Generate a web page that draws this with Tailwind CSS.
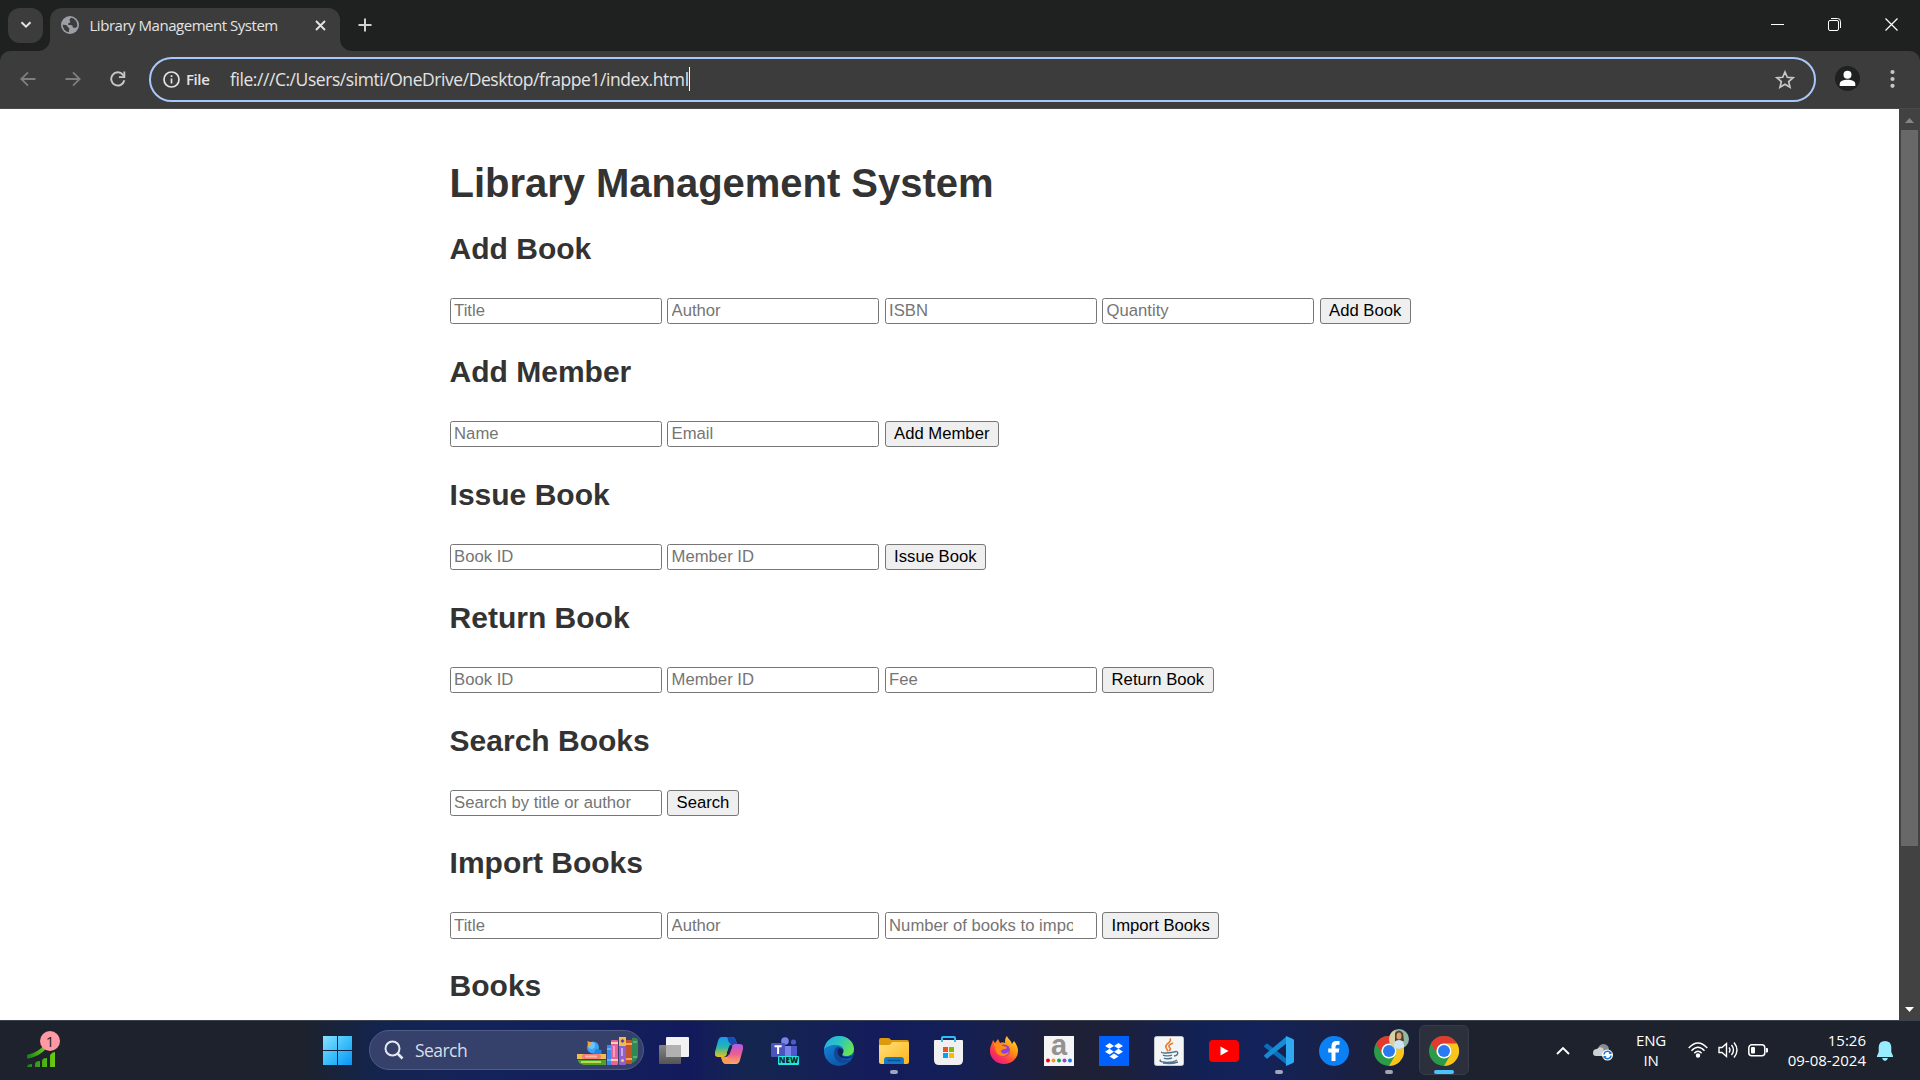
<!DOCTYPE html>
<html lang="en">
<head>
<meta charset="utf-8">
<title>Library Management System</title>
<script src="https://cdn.jsdelivr.net/npm/@tailwindcss/browser@4"></script>
</head>
<body class="w-[1920px] h-[1080px] overflow-hidden flex flex-col bg-[#1f2120] font-['Open_Sans',sans-serif]">

<!-- Tab strip -->
<header class="h-[51px] shrink-0 flex items-start bg-[#1f2120] text-[#e3e3e3]">
  <div class="ml-2 mt-2 size-[35px] rounded-xl bg-[#3c3c3c] grid place-items-center">
    <svg class="mb-0.5" width="12" height="8" viewBox="0 0 12 8" fill="none" stroke="#e3e3e3" stroke-width="2"><path d="M1.5 1.2 6 5.7l4.5-4.5"/></svg>
  </div>
  <div class="relative ml-[7px] mt-2 w-[290px] h-[43px] rounded-t-xl bg-[#3c3c3c] flex items-center pl-[11px] pb-[9px]">
    <svg class="absolute -left-3 bottom-0" width="12" height="12"><path d="M12 0v12H0A12 12 0 0 0 12 0z" fill="#3c3c3c"/></svg>
    <svg class="absolute -right-3 bottom-0" width="12" height="12"><path d="M0 0v12h12A12 12 0 0 1 0 0z" fill="#3c3c3c"/></svg>
    <svg class="shrink-0" width="18" height="18" viewBox="0 0 18 18"><circle cx="9" cy="9" r="9" fill="#9aa0a6"/><path d="M10.2 1.8c-1 .5-1.6 1.300-1.600 2.300 0 1 .7 1.200.7 2-.100 1.100-2.300.6-2.300 2 0 1 1.200.9 2.600.9 1.500 0 2.100.8 2.100 1.800 0 1.200 1.500.9 2.900.9 1 0 1.600-.8 1.700-2.700A7.300 7.300 0 0 0 10.200 1.800zM1.700 8.700c1.700 0 4.700.2 4.700 1.800 0 1.100 1.900.7 1.900 2.200 0 1.200-.5 2.200-.4 3.500A7.300 7.300 0 0 1 1.700 8.700z" fill="#3c3c3c"/></svg>
    <span class="ml-[10.500px] w-[212px] shrink-0 text-[15px] leading-5 tracking-[-0.47px] whitespace-nowrap">Library Management System</span>
    <svg class="ml-[13px] mt-px shrink-0" width="11" height="11" viewBox="0 0 11 11" stroke="#e3e3e3" stroke-width="1.900"><path d="M1 1l9 9M10 1l-9 9"/></svg>
  </div>
  <svg class="ml-[18px] mt-[18px]" width="14" height="14" viewBox="0 0 14 14" stroke="#d0d2d1" stroke-width="2"><path d="M7 0.500v13M.5 7h13"/></svg>
  <div class="ml-auto mt-[18px] mr-[22px] flex items-center gap-[44px]">
    <svg width="13" height="13" shape-rendering="crispEdges"><path d="M0 6h13v1H0z" fill="#fff"/></svg>
    <svg width="13" height="13" viewBox="0 0 13 13" fill="none" stroke="#fff"><rect x=".5" y="2.500" width="10" height="10" rx="1.500"/><path d="M3 .5h6.500a3 3 0 0 1 3 3V10"/></svg>
    <svg width="13" height="13" viewBox="0 0 13 13" stroke="#fff" stroke-width="1.200"><path d="M.5.5l12 12M12.500.5l-12 12"/></svg>
  </div>
</header>

<!-- Toolbar -->
<div class="h-[58px] shrink-0 rounded-t-[10px] bg-[#3c3c3c] border-b border-[#494949] flex items-start">
  <div class="flex items-center h-[55px] pl-5 gap-[29px]">
    <svg width="16" height="16" viewBox="0 0 16 16" fill="none" stroke="#7e7e7e" stroke-width="1.800"><path d="M15.500 8H1.500M8 1.300 1.300 8 8 14.700"/></svg>
    <svg width="16" height="16" viewBox="0 0 16 16" fill="none" stroke="#7e7e7e" stroke-width="1.800"><path d="M.5 8h14M8 1.300 14.700 8 8 14.700"/></svg>
    <svg width="16" height="16" viewBox="0 0 16 16" fill="none" stroke="#c7c7c7" stroke-width="1.900"><path d="M14.300 9.200A6.600 6.600 0 1 1 13 3.800L14.500 5.500"/><path d="M14.300.5v5.600H8.900" /></svg>
  </div>
  <div class="ml-[23px] mt-1.5 w-[1667px] h-[45px] rounded-full border-[2.500px] border-[#a8c7fa] flex items-center text-[#e3e3e3]">
    <svg class="ml-[12px]" width="17" height="17" viewBox="0 0 17 17" fill="none" stroke="#e3e3e3" stroke-width="1.700"><circle cx="8.500" cy="8.500" r="7.500"/><path d="M8.500 7.500v5M8.500 4.300v1.700"/></svg>
    <span class="ml-[6px] w-[44px] text-[15px] font-semibold tracking-[-0.4px] leading-5 pb-0.5">File</span>
    <span class="text-[17.500px] leading-6 pb-px tracking-[-0.44px] whitespace-nowrap">file:///C:/Users/simti/OneDrive/Desktop/frappe1/index.html</span>
    <span class="w-px h-6 mb-0.5 bg-white"></span>
    <svg class="ml-auto mr-[19px]" width="20" height="19" viewBox="0 0 20 19" fill="none" stroke="#c7c7c7" stroke-width="1.700"><path d="M10 2l2.300 5.300 5.700.5-4.300 3.800 1.300 5.600-5-3-5 3 1.300-5.600L2 7.800l5.700-.5z"/></svg>
  </div>
  <svg class="ml-[19px] mt-[15px]" width="25" height="25" viewBox="0 0 25 25"><circle cx="12.500" cy="12.500" r="12.500" fill="#1f2120"/><circle cx="12.500" cy="8.700" r="4" fill="#fff"/><path d="M4.700 20v-2c0-3 4-4.300 7.800-4.300s7.800 1.300 7.800 4.300v2z" fill="#fff"/></svg>
  <svg class="ml-[30px] mt-[18px]" width="5" height="20" viewBox="0 0 5 20" fill="#c7c7c7"><circle cx="2.500" cy="3" r="2.100"/><circle cx="2.500" cy="10" r="2.100"/><circle cx="2.500" cy="16.800" r="2.100"/></svg>
</div>

<!-- Page -->
<div class="flex-1 min-h-0 flex">
  <main class="flex-1 h-[911px] overflow-hidden bg-white pl-[449.600px] pt-[51px] text-[#333] font-['Liberation_Sans',Arial,sans-serif]">
    <h1 class="text-[40px] leading-[46px] font-bold tracking-[-0.03px]">Library Management System</h1>
    <div id="sections" class="pt-[26px]"></div>
  </main>
  <div class="w-[21px] bg-[#424242] flex flex-col items-center">
    <svg class="mt-[9px] shrink-0" width="9" height="5"><path d="M0 5 4.500 0 9 5z" fill="#858585"/></svg>
    <div class="mt-[7px] w-[17px] h-[716px] mr-px bg-[#686868] shrink-0"></div>
    <svg class="mt-auto mb-[8px] shrink-0" width="9" height="5"><path d="M0 0h9L4.500 5z" fill="#fff"/></svg>
  </div>
</div>

<!-- Taskbar -->
<footer class="h-[60px] shrink-0 border-t border-[#3b444e] flex items-center text-white bg-[linear-gradient(90deg,#1d222c_0px,#1d222c_300px,#13244f_380px,#13235a_470px,#121f5c_620px,#131a5c_690px,#14264f_750px,#141c5c_880px,#131f58_950px,#1f2036_1060px,#1e2038_1110px,#122155_1200px,#13225a_1260px,#1b203c_1380px,#1d222c_1480px,#1d222c_1920px)]">
  <div class="relative ml-[27px] mt-1.5 w-[29px] h-[28px]">
    <svg width="29" height="28" viewBox="0 0 29 28"><defs><linearGradient id="gr"><stop stop-color="#17831b"/><stop offset="1" stop-color="#6ecb12"/></linearGradient></defs><g fill="url(#gr)"><path d="M0 27q0-3 5-3v3zM8 27v-3q0-3 5-3v6zM15 27v-6q0-3 5-3v9zM23 27V15q2-3 5-3v15z"/></g><path d="M1.500 16.500Q12 14 18 7" fill="none" stroke="url(#gr)" stroke-width="4" stroke-linecap="round"/></svg>
    <div class="absolute left-[13px] top-[-9px] size-5 rounded-full bg-[#ff99a4] text-[#222] text-[15px] leading-5 text-center">1</div>
  </div>
  <svg class="ml-[267px]" width="29" height="29" viewBox="0 0 29 29"><defs><linearGradient id="w" x1="0" y1="0" x2="29" y2="29" gradientUnits="userSpaceOnUse"><stop stop-color="#8be0ff"/><stop offset=".5" stop-color="#3cc0fb"/><stop offset="1" stop-color="#0a93f6"/></linearGradient></defs><path fill="url(#w)" d="M0 0h14v14H0zM15 0h14v14H15zM0 15h14v14H0zM15 15h14v14H15z"/></svg>
  <div class="ml-[17px] mb-px w-[275px] h-10 rounded-full bg-[#35416b] border border-[#515d84] overflow-hidden flex items-center">
    <svg class="ml-[14px]" width="20" height="20" viewBox="0 0 20 20" fill="none" stroke="#e6e8ee" stroke-width="2"><circle cx="8.500" cy="8.500" r="7"/><path d="M13.500 13.500 18.500 18.500" stroke-width="2.600"/></svg>
    <span class="ml-[11px] text-[17.500px] tracking-[-0.55px] leading-6 text-[#dadde6]">Search</span>
    <svg class="ml-auto mr-[3px] mt-0.5" width="64" height="30" viewBox="0 0 64 30">
      <path d="M2 24h28v5H8q-6-1-6-5z" fill="#53a12d"/><path d="M5 26h20" stroke="#b5dc53" stroke-width="2"/><path d="M1 18h29v5H1z" fill="#f3bc52"/><rect x="6" y="18" width="19" height="5" rx="2.500" fill="#ef7f78"/><rect x="9" y="19.500" width="12" height="2" fill="#ffb6a3"/>
      <circle cx="17" cy="11.500" r="6" fill="#3ba4f3"/><circle cx="15.500" cy="9.500" r="3.500" fill="#6ac5ff"/><path d="M11.500 5l5 2-4.500 4z" fill="#f6a13a"/><path d="M20 13l5.500 1v4H17z" fill="#2186e0"/>
      <rect x="31" y="9" width="4" height="20" fill="#3989ef"/><path d="M31 13h4M31 24h4" stroke="#9fd0ff"/>
      <rect x="35" y="4" width="7" height="25" rx="1" fill="#e8629d"/><path d="M35 7h7M35 24h7" stroke="#ffd0a5" stroke-width="2"/><path d="M38 10v11" stroke="#ff9ac3" stroke-width="2"/>
      <rect x="43" y="1" width="7" height="28" rx="1" fill="#8d62cf"/><path d="M43 1h7v9h-7z" fill="#f4bd3d"/><path d="M46.500 3l2 2-2 2-2-2z" fill="#5a3bb1"/><path d="M46 12v8" stroke="#c5a7f3" stroke-width="2"/><circle cx="46.500" cy="24.500" r="1.500" fill="#f7cf57"/>
      <rect x="50" y="4" width="6" height="24" rx="1" fill="#c45427"/><path d="M50 8h6M50 23h6" stroke="#f4a55a" stroke-width="2"/>
      <path d="M56 2q5-1 6 2v16q-1 5-6 7z" fill="#2f8955"/><path d="M57 6h4M57 21h4" stroke="#8ed090"/>
    </svg>
  </div>
  <nav class="ml-[2px] h-full flex items-center *:relative *:w-[55px] *:shrink-0 *:h-full *:flex *:items-center *:justify-center">
    <div><svg width="30" height="30" viewBox="0 0 30 30"><defs><linearGradient id="tv" x1="0" y1="0" x2="0" y2="1"><stop stop-color="#858585"/><stop offset="1" stop-color="#555"/></linearGradient></defs><rect y="9" width="22" height="19" rx="1" fill="url(#tv)"/><rect x="7" y="1" width="23" height="20" rx="1" fill="#f2f2f2"/><path d="M7 9h15v12H8a1 1 0 0 1-1-1z" fill="#b1b1b1"/></svg></div>
    <div><svg width="28" height="27" viewBox="0 0 28 27"><defs><linearGradient id="c1" x1="0" y1="0" x2="0" y2="1"><stop stop-color="#159af0"/><stop offset=".5" stop-color="#25b6b0"/><stop offset="1" stop-color="#ebc317"/></linearGradient><linearGradient id="c2" x1="0" y1="0" x2="0" y2="1"><stop stop-color="#a95be8"/><stop offset=".5" stop-color="#ef5d90"/><stop offset="1" stop-color="#ffad61"/></linearGradient></defs><path d="M7 0h10q3 0 4 4l1 3h-4q-3 0-4 3l-2 7q-1 3-4 3H3q-4 0-3-5L3 4q1-4 4-4z" fill="url(#c1)"/><path d="M16 0q4 0 5 4l1 3h-5q-3 0-4-4 0-3-2-3z" fill="#174bb5"/><path d="M21 27H11q-3 0-4-4l-1-3h4q3 0 4-3l2-7q1-3 4-3h5q4 0 3 5l-3 11q-1 4-4 4z" fill="url(#c2)"/><path d="M12 27q-4 0-5-4l-1-3h5q3 0 4 4 0 3 2 3z" fill="#fb9a54"/><path d="M13 17l3-8" stroke="#16204f" stroke-width="3"/></svg></div>
    <div><svg class="ml-0.5" width="28" height="28" viewBox="0 0 28 28"><circle cx="14" cy="4" r="3.800" fill="#7b83eb"/><circle cx="22.500" cy="5" r="2.600" fill="#5059c9"/><path d="M18 9h8v9q-1 3-5 3h-3z" fill="#5059c9"/><path d="M8 9h12v14h-8q-4-2-4-6z" fill="#7b83eb"/><rect y="6" width="14" height="14" rx="1" fill="#4b53bc"/><path d="M3.500 9.200h7.200M7.100 9.200V17" stroke="#fff" stroke-width="2"/><rect x="7" y="19" width="21" height="9" rx="1" fill="#25e5df"/><text x="17.500" y="26.400" text-anchor="middle" font-size="8" font-weight="800" font-family="Open Sans" fill="#05252c">NEW</text></svg></div>
    <div><svg width="30" height="30" viewBox="0 0 30 30"><defs><linearGradient id="e1" x1="0" y1="0" x2="1" y2=".5"><stop stop-color="#28a8e8"/><stop offset=".5" stop-color="#2bc4c6"/><stop offset="1" stop-color="#65e255"/></linearGradient><linearGradient id="e2" x1="0" y1="0" x2=".6" y2="1"><stop stop-color="#168fe0"/><stop offset="1" stop-color="#0b54a5"/></linearGradient></defs><circle cx="15" cy="15" r="15" fill="url(#e2)"/><path d="M0 14C1 5 8 0 15 0c9 0 15 6 15 13 0 5-4 7-7 7-5 0-5-1-4-3 2-4-1-8-7-8C6 9 1 11 0 14z" fill="url(#e1)"/><path d="M11 13c-3 6 1 14 9 14 4 0 6-2 8-3-4 1-12 0-14-7-.5-3 .5-5 2-6-2-.5-4 0-5 2z" fill="#10479b"/><path d="M15 12c-3 3-1 9 4 10 4 1 8 0 11-3-2 1-4 2-7 2-5 0-6-2-4-4 1-2 0-5-4-5z" fill="#14205a"/></svg></div>
    <div><svg width="30" height="26" viewBox="0 0 30 26"><defs><linearGradient id="f" x1="0" y1="0" x2="1" y2="1"><stop stop-color="#ffe07a"/><stop offset="1" stop-color="#fcb51b"/></linearGradient></defs><path d="M0 2q0-2 2-2h7q2 0 3 2h16q2 0 2 2v5H0z" fill="#dc9a0c"/><path d="M0 7h10q2 0 3-3h15q2 0 2 2v18q0 2-2 2H2q-2 0-2-2z" fill="url(#f)"/><path d="M5 26v-4q0-3 3-3h14q3 0 3 3v4z" fill="#1579c9"/><path d="M9 22.500h12" stroke="#09518f" stroke-width="1.500" stroke-linecap="round"/></svg><i class="absolute bottom-[6px] w-2 h-1 rounded-full bg-[#a2a5bb]"></i></div>
    <div><svg width="29" height="29" viewBox="0 0 29 29"><path d="M8 6V2q0-1 1-1h11q1 0 1 1v4" fill="none" stroke="#31bdf3" stroke-width="2"/><path d="M0 5q0-1 1-1h27q1 0 1 1v19q0 5-5 5H5q-5 0-5-5z" fill="#f0f0f0"/><path d="M8 4v2M21 4v2" stroke="#31bdf3" stroke-width="2"/><path d="M9 11h5v5H9z" fill="#f25022"/><path d="M15 11h5v5h-5z" fill="#7fba00"/><path d="M9 17h5v5H9z" fill="#00a4ef"/><path d="M15 17h5v5h-5z" fill="#ffb900"/></svg></div>
    <div><svg class="mb-0.5" width="28" height="28" viewBox="0 0 28 28"><defs><linearGradient id="ff" x1="1" y1="0" x2=".2" y2="1"><stop stop-color="#fff04d"/><stop offset=".4" stop-color="#ff980e"/><stop offset=".75" stop-color="#ff3650"/><stop offset="1" stop-color="#e21790"/></linearGradient></defs><path d="M17 0c1 3 4 4 5 8l2-3c3 4 4 7 4 10a14 13 0 0 1-28 0C0 10 2 8 3 4l2 3 3-4 2 4c2-1 3-1 5 0 0-3 0-5 2-7z" fill="url(#ff)"/><circle cx="14" cy="14.500" r="6" fill="#9040df"/><path d="M4 8c4-2 6 0 9 2 2 0 4 1 4 2-2 2-4 0-6 3 0 3 5 4 8 0-1 6-10 7-13 1z" fill="#ff8a16"/></svg></div>
    <div><svg width="30" height="30" viewBox="0 0 30 30"><rect width="30" height="30" fill="#f5f5f5"/><text x="15" y="19" text-anchor="middle" font-size="29" font-weight="700" font-family="Liberation Sans" fill="#929292">a</text><circle cx="4" cy="24.500" r="2" fill="#f00014"/><circle cx="9.500" cy="24.500" r="2" fill="#f7981d"/><circle cx="15" cy="24.500" r="2" fill="#12a653"/><circle cx="20.500" cy="24.500" r="2" fill="#9344d9"/><circle cx="26" cy="24.500" r="2" fill="#1280e8"/></svg></div>
    <div><svg width="30" height="30" viewBox="0 0 30 30"><rect width="30" height="30" fill="#0061fe"/><path fill="#fff" d="M10.500 7l4.500 2.900-4.500 2.900L6 9.900zM19.500 7l4.500 2.900-4.500 2.900L15 9.900zM10.500 12.800l4.500 2.900-4.500 2.900L6 15.700zM19.500 12.800l4.500 2.900-4.500 2.900-4.500-2.900zM15 17.500l4.500 2.900-4.500 2.900-4.500-2.900z"/></svg></div>
    <div><svg width="30" height="30" viewBox="0 0 30 30" fill="none"><rect x=".5" y=".5" width="29" height="29" rx="2" fill="#f5f5f5" stroke="#c3c8cd"/><path d="M16 2.500c3 4-6 5-4 9l2 4M19 7c-5 2-5 3-3 5 1 1 0 2-1 3" stroke="#e77a2d" stroke-width="1.600"/><path d="M8 16c-2 1 5 1.500 12 0M9 19c1 1 7 1.200 9 0M10 22c1 1 6 1 8 0M20 16c5-2 5 3 0 4M7 24c-5 2 10 4 16 0M9 27c6 1 12 0 15-1" stroke="#4d7590" stroke-width="1.400"/></svg></div>
    <div><svg width="30" height="22" viewBox="0 0 30 22"><rect width="30" height="22" rx="4" fill="#f00"/><path d="M11.500 6.500v9l8-4.500z" fill="#fff"/></svg></div>
    <div><svg width="30" height="30" viewBox="0 0 30 30"><path d="M0 10l2-2q1-1 2 0l19 15v6L1 11.500Q0 11 0 10z" fill="#0a6fb9"/><path d="M0 20l2 2q1 1 2 0L23 7V0L1 18.500Q0 19 0 20z" fill="#168cd4"/><path d="M22 0l7 3q1 .5 1 2v20q0 1.500-1 2l-7 3z" fill="#2fa9f1"/></svg><i class="absolute bottom-[6px] w-2 h-1 rounded-full bg-[#a2a5bb]"></i></div>
    <div><svg width="30" height="30" viewBox="0 0 30 30"><circle cx="15" cy="15" r="15" fill="#0c80f5"/><path d="M12.500 25v-8.500H9.200v-4h3.300V10q0-5 5-5h3v3.800h-2q-2 0-2 2v1.700h3.800l-.6 4h-3.200V25z" fill="#fff"/></svg></div>
    <div><svg width="30" height="30" viewBox="0 0 30 30"><g id="chrome"><circle cx="15" cy="15" r="15" fill="#2a9b47"/><path d="M2 7.500A15 15 0 0 1 28 7.500H15a7.500 7.500 0 0 0-6.500 11.300z" fill="#e23a2e"/><path d="M28 7.500A15 15 0 0 1 15 30l6.500-11.300A7.500 7.500 0 0 0 15 7.500z" fill="#fcc31b"/><circle cx="15" cy="15" r="7.600" fill="#fff"/><circle cx="15" cy="15" r="6" fill="#2979f0"/></g></svg>
      <svg class="absolute left-[28px] top-[8px]" width="20" height="20" viewBox="0 0 20 20"><defs><clipPath id="av"><circle cx="10" cy="10" r="10"/></clipPath></defs><g clip-path="url(#av)"><path d="M0 0h20v20H0z" fill="#8fb9a3"/><path d="M0 0h6v20H0z" fill="#d9cfa5"/><path d="M6 4q4-5 8 0l1 8H6z" fill="#593d2b"/><ellipse cx="10" cy="7" rx="2.500" ry="3.500" fill="#d7a07c"/><path d="M5 20q-1-9 5-9t5 9z" fill="#cfe6f2"/></g></svg><i class="absolute bottom-[6px] w-2 h-1 rounded-full bg-[#a2a5b0]"></i></div>
    <div><span class="absolute left-[2.500px] top-1 size-[50px] rounded-md bg-[#2c303d] border border-[#383c48]"></span><svg class="relative" width="30" height="30" viewBox="0 0 30 30"><use href="#chrome"/></svg><i class="absolute bottom-[6px] w-5 h-1 rounded-full bg-[#4cc2ff]"></i></div>
  </nav>
  <div class="ml-auto mb-px flex items-center text-[15px] leading-5">
    <svg width="14" height="9" viewBox="0 0 14 9" fill="none" stroke="#fff" stroke-width="1.900"><path d="M1 8l6-6 6 6"/></svg>
    <svg class="ml-[23px] mt-[3px]" width="20" height="18" viewBox="0 0 20 18"><path d="M5 6q1-5 6-5 5 1 5 6l1 5H5z" fill="#8a8b8e"/><path d="M0 10q0-4 4-4 2-3 6-1l2 8H3q-3 0-3-3z" fill="#cfd0d2"/><circle cx="14.500" cy="12" r="5.500" fill="#fff"/><path d="M11 11.500a3.500 3.500 0 0 1 6.500-1.500M18 12.500a3.500 3.500 0 0 1-6.500 1.500" fill="none" stroke="#1976cf" stroke-width="1.500"/><path d="M18.500 8v3h-3zM10.500 16v-3h3z" fill="#1976cf"/></svg>
    <div class="ml-[20px] w-[36px] text-center tracking-[-0.2px]">ENG<br>IN</div>
    <svg class="ml-[19px]" width="20" height="16" viewBox="0 0 20 16" fill="none" stroke="#fff" stroke-width="1.400"><path d="M.7 6Q10-4 19.300 6M3.500 8.700q6.500-7 13 0M6.300 11.300q3.700-4 7.400 0"/><circle cx="10" cy="13.500" r="1.500" fill="#fff"/></svg>
    <svg class="ml-[10px]" width="20" height="18" viewBox="0 0 20 18" fill="none" stroke="#fff" stroke-width="1.400"><path d="M1 6.500h3L8.500 2.500v13L4 11.500H1zM11 6.500q2 2.500 0 5M13.500 4q4 5 0 10M16 1.500q6 7.500 0 15"/></svg>
    <svg class="ml-[10px]" width="20" height="14" viewBox="0 0 20 14"><rect x=".8" y="1.800" width="16" height="11" rx="3" fill="none" stroke="#fff" stroke-width="1.500"/><rect x="3" y="4" width="4" height="6.600" rx="1" fill="#fff"/><path d="M18 5h1q1 0 1 1v2.500q0 1-1 1h-1z" fill="#fff"/></svg>
    <div class="ml-[18px] w-[80px] text-right whitespace-nowrap">15:26<br>09-08-2024</div>
    <svg class="ml-[11px] mr-[27px] mt-px" width="16" height="20" viewBox="0 0 16 20" fill="#98ecfe"><path d="M8 0q6 0 6.300 6v5l1.700 4v1H0v-1l1.700-4V6Q2 0 8 0zM5 17h6q-1 3-3 3t-3-3z"/></svg>
  </div>
</footer>

<script>
const sections = [
  ['Add Book', ['Title', 'Author', 'ISBN', 'Quantity'], 'Add Book'],
  ['Add Member', ['Name', 'Email'], 'Add Member'],
  ['Issue Book', ['Book ID', 'Member ID'], 'Issue Book'],
  ['Return Book', ['Book ID', 'Member ID', 'Fee'], 'Return Book'],
  ['Search Books', ['Search by title or author'], 'Search'],
  ['Import Books', ['Title', 'Author', 'Number of books to import'], 'Import Books'],
  ['Books', [], ''],
];
document.getElementById('sections').innerHTML = sections.map(([title, fields, button]) => `
  <section class="h-[122.9px]">
    <h2 class="text-[30px] leading-[34px] font-bold">${title}</h2>
    <form class="mt-[32px] flex gap-[5.500px] text-[16.670px] leading-[20px]">
      ${fields.map(f => `<input placeholder="${f}" class="w-[212px] h-[26.250px] rounded-[2.500px] border border-[#767676] bg-white pl-[3.500px] pr-[23px] placeholder:text-[#757575]">`).join('')}
      ${button ? `<button type="button" class="h-[26.250px] rounded-[3px] border border-[#767676] bg-[#efefef] text-black px-[8.500px] whitespace-nowrap">${button}</button>` : ''}
    </form>
  </section>`).join('');
</script>
</body>
</html>
